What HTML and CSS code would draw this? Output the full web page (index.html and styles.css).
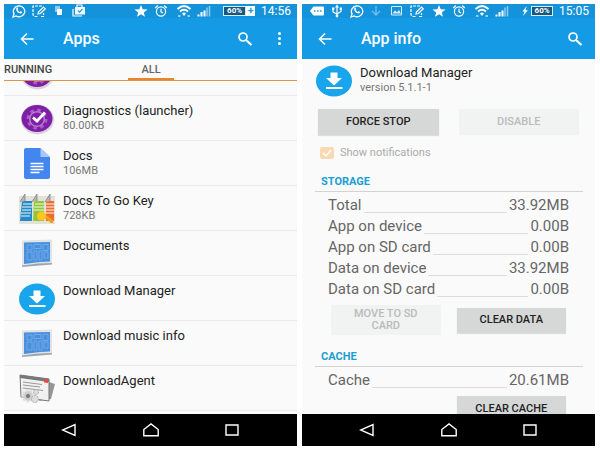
FILE: index.html
```html
<!DOCTYPE html>
<html lang="en">
<head>
  <meta charset="UTF-8">
  <title>Apps</title>
  <link rel="stylesheet" href="styles.css">
</head>
<body>
  <!-- Shared icons -->
  <svg class="sprite" aria-hidden="true">
    <symbol id="whatsapp" viewBox="0 0 14 14">
      <path d="M1 13l1-3.200a5.700 5.400 0 1 1 2.200 2.200z" fill="none" stroke="#fff" stroke-width="1.300"/>
      <path d="M4.600 3.800c.8-.5 1.200 0 1.500 1.200.1.500-.5.700-.5 1 .5 1 1.300 1.600 2.100 1.900.4 0 .7-.8 1.100-.7 1.200.5 1.600.8 1.300 1.500-.5 1-2 1-3.300.3C4.900 8 3.500 5.700 4.600 3.800z" fill="#fff"/>
    </symbol>
    <symbol id="note" viewBox="0 0 14 14">
      <path d="M10 2H1v9l2 1.500h3M9 12.500h2.500V9" fill="none" stroke="#fff" stroke-width="1.200" stroke-dasharray="3 1"/>
      <path d="M6 10l.6-2.300L11.500 3 13.300 4.800 8.300 9.500z" fill="none" stroke="#fff" stroke-width="1.200"/>
    </symbol>
    <symbol id="copy" viewBox="0 0 14 14">
      <path d="M3 2h5v6H3z" fill="#8ccbf2"/>
      <path d="M5 5h5v6H5z" fill="#fff"/>
    </symbol>
    <symbol id="case" viewBox="0 0 14 14">
      <path d="M1 5v7h9" fill="none" stroke="#fff" stroke-width="1.200"/>
      <path d="M5 3V1h5v2" fill="none" stroke="#fff" stroke-width="1.200"/>
      <path d="M3 3h10v7.500H3z" fill="#fff"/>
      <path d="M6 6.500l1.500 1.700L10.500 5" fill="none" stroke="#159be6" stroke-width="1.200"/>
    </symbol>
    <symbol id="message" viewBox="0 0 14 14">
      <path d="M0 7l3.500-4.500H13a1 1 0 0 1 1 1v7a1 1 0 0 1-1 1H3.500z" fill="#fff"/>
      <path d="M4 7h1.500M7 7h1.500M10 7h1.500" stroke="#159be6" stroke-width="1.500"/>
    </symbol>
    <symbol id="usb" viewBox="0 0 14 14">
      <path d="M7 2v10M3 5v3l4 2 4-2.500V5" fill="none" stroke="#fff" stroke-width="1.200"/>
      <path d="M5 3.500L7 .5l2 3zM2 3.500h2.400v2.300H2zM9.700 3.500H12v2.300H9.700z" fill="#fff"/>
      <circle cx="7" cy="12" r="1.400" fill="#fff"/>
    </symbol>
    <symbol id="arrow-down" viewBox="0 0 14 14">
      <path d="M6 2v9M2 7l4 4 4-4" fill="none" stroke="#6fc0f0" stroke-width="1.300"/>
    </symbol>
    <symbol id="image" viewBox="0 0 14 14">
      <path d="M1.500 2.500h10v8.500h-10z" fill="none" stroke="#d5edfb"/>
      <path d="M2.500 9.500l2.500-3 2 1.700 2-2.200 2 3.500z" fill="#d5edfb"/>
    </symbol>
    <symbol id="star" viewBox="0 0 14 14">
      <path d="M7 1l1.700 4.200 4.800.3-3.700 2.900 1.200 4.300L7 10.300l-4 2.400 1.200-4.300L.5 5.500l4.800-.3z" fill="#fff"/>
    </symbol>
    <symbol id="alarm" viewBox="0 0 14 14">
      <circle cx="7" cy="7.500" r="4.600" fill="none" stroke="#fff" stroke-width="1.200"/>
      <path d="M7 4.800v3l2 1.200M1.200 4l2.600-2.500M12.800 4l-2.600-2.500" fill="none" stroke="#fff" stroke-width="1.200"/>
    </symbol>
    <symbol id="wifi" viewBox="0 0 14 14">
      <path d="M.5 5Q7-1 13.500 5M3 7.500q4-3.500 8 0" fill="none" stroke="#fff" stroke-width="1.800"/>
      <path d="M5 9.500q2-1.800 4 0L7 12z" fill="#fff"/>
      <path d="M1 12h2.500M10.500 12H13" stroke="#bfe3f9" stroke-width="1.500"/>
    </symbol>
    <symbol id="signal" viewBox="0 0 14 14">
      <path d="M1.500 12.500v-2M4.500 12.500V8M7.500 12.500v-6" stroke="#fff" stroke-width="2"/>
      <path d="M10 12.500v-9M12.500 12.500V2" stroke="#8ccbf2" stroke-width="1.500"/>
    </symbol>
    <symbol id="back" viewBox="0 0 14 14">
      <path d="M13.500 7H1.500M7 1.500L1.500 7 7 12.500" fill="none" stroke="#fff" stroke-width="1.500"/>
    </symbol>
    <symbol id="search" viewBox="0 0 16 14">
      <circle cx="6" cy="5" r="4" fill="none" stroke="#fff" stroke-width="1.700"/>
      <path d="M9 8l5.500 5" stroke="#fff" stroke-width="2.200"/>
    </symbol>
    <symbol id="download" viewBox="0 0 36 32">
      <ellipse cx="18" cy="16" rx="18" ry="15.500" fill="#18a5ec"/>
      <path d="M14.500 7.500h7V13H26l-8 7.500-8-7.500h4.500zM10 22h16.500v2H10z" fill="#fff"/>
    </symbol>
    <symbol id="gear-check" viewBox="0 0 36 32">
      <ellipse cx="18.500" cy="16.500" rx="16.500" ry="15" fill="#d9d3de"/>
      <ellipse cx="18" cy="15.500" rx="15.500" ry="13.500" fill="#7f1fa8"/>
      <circle cx="18" cy="16" r="9" fill="none" stroke="#a561c4" stroke-width="3" stroke-dasharray="3.500 3.560"/>
      <circle cx="18" cy="16" r="7.300" fill="#7f1fa8" stroke="#b67bd0" stroke-width="1.500"/>
      <path d="M14 14.500l4 3.500 8-8.500" fill="none" stroke="#fff" stroke-width="2.800"/>
    </symbol>
    <symbol id="blueprint" viewBox="0 0 36 32">
      <path d="M3 2.500l30-1v24L3 28.500z" fill="#e0e3e5"/>
      <path d="M3 27.500l16-2 14-.5v1.500L3 29z" fill="#9ea6ad"/>
      <path d="M5 4.500l26-.5v19.500l-10 .5L5 26z" fill="#4a90dc"/>
      <path d="M8 7h5v5H8zM15 6.500h7v4h-7zM24 6.500h5v6h-5zM8 14h5v8H8zM15 13h3v9h-3zM20 13h3v9h-3zM25 14h4v6h-4z" fill="none" stroke="#7fb6ee" stroke-width=".7"/>
    </symbol>
    <symbol id="docs" viewBox="0 0 36 32">
      <path d="M7 0h14.500l9.500 9v20a2 2 0 0 1-2 2H7a2 2 0 0 1-2-2V2a2 2 0 0 1 2-2z" fill="#4486f0"/>
      <path d="M21.500 0L31 9h-9.500z" fill="#a9c8fa"/>
      <path d="M11.500 15.500h13M11.500 18.500h13M11.500 21.500h13M11.500 24.500h9" stroke="#fff" stroke-width="1.500"/>
    </symbol>
    <symbol id="docs-to-go" viewBox="0 0 36 32">
      <path d="M0 3h36v28H0z" fill="#e2e1da"/>
      <path d="M3 8h10v20H1z" fill="#238ac9"/>
      <path d="M15 8h10v20H14z" fill="#91c936"/>
      <path d="M27 8h8v20h-8z" fill="#ef6c2e"/>
      <path d="M4 11h9M3 14h10M3 17h9M2 20h10M2 23h9M16 11h9M15 14h10M15 17h10M27 11h8M27 14h8M27 17h8M27 20h8" stroke="#f5f5ef"/>
      <path d="M1 9l5-8v7M13 9l5-8v7M26 9l5-8v7" fill="#b7b8b5" stroke="#777975" stroke-width=".7"/>
      <path d="M24 24l8 6h2v-3l-8-6z" fill="#f29e1a"/>
      <circle cx="22.500" cy="23" r="4.500" fill="#ffc61b"/>
    </symbol>
    <symbol id="agent" viewBox="0 0 36 32">
      <path d="M30 9l6 2-4 15-12 2z" fill="#969696"/>
      <path d="M1 2l29 4v22L2 24z" fill="#f1f1f1" stroke="#777"/>
      <path d="M1 2l29 4v3L1 5z" fill="#777"/>
      <path d="M25 6l4 .6V10l-4-.6z" fill="#e64c42"/>
      <path d="M4 9l19 2.500M4 12l17 2M4 15l20 2.500" stroke="#999"/>
      <circle cx="9" cy="23" r="5" fill="#c9c9c9" stroke="#ddd" stroke-width="3" stroke-dasharray="2 1.500"/>
      <circle cx="9" cy="23" r="2" fill="#777"/>
      <circle cx="16" cy="26" r="3.500" fill="#ddd" stroke="#aaa" stroke-dasharray="2 1"/>
      <circle cx="17" cy="19" r="2.500" fill="#ddd" stroke="#aaa" stroke-dasharray="2 1"/>
    </symbol>
    <symbol id="nav-back" viewBox="0 0 16 14">
      <path d="M14 1.500v11L1.500 7z" fill="none" stroke="#fff" stroke-width="1.400"/>
    </symbol>
    <symbol id="nav-home" viewBox="0 0 16 14">
      <path d="M.8 12.800V6.500L8 1l7.200 5.500v6.300z" fill="none" stroke="#fff" stroke-width="1.400"/>
    </symbol>
    <symbol id="nav-recent" viewBox="0 0 16 14">
      <path d="M2 2h12v10H2z" fill="none" stroke="#fff" stroke-width="1.400"/>
    </symbol>
  </svg>

  <!-- Apps list -->
  <section class="phone">
    <header>
      <div class="status">
        <svg><use href="#whatsapp"/></svg>
        <svg><use href="#note"/></svg>
        <svg><use href="#copy"/></svg>
        <svg><use href="#case"/></svg>
        <svg class="star"><use href="#star"/></svg>
        <svg><use href="#alarm"/></svg>
        <svg class="wifi"><use href="#wifi"/></svg>
        <svg><use href="#signal"/></svg>
        <span class="battery"><b>60%</b><i>+</i></span>
        <time>14:56</time>
      </div>
      <div class="bar">
        <button class="icon-btn" aria-label="Back"><svg><use href="#back"/></svg></button>
        <h1>Apps</h1>
        <button class="icon-btn" aria-label="Search"><svg class="search"><use href="#search"/></svg></button>
        <button class="icon-btn more" aria-label="More"><span></span><span></span><span></span></button>
      </div>
    </header>
    <nav class="tabs">
      <a href="#running">RUNNING</a>
      <a href="#all" class="active">ALL</a>
    </nav>
    <ul class="apps">
      <li><svg><use href="#gear-check"/></svg></li>
      <li><svg><use href="#gear-check"/></svg><div><h2>Diagnostics (launcher)</h2><p>80.00KB</p></div></li>
      <li><svg><use href="#docs"/></svg><div><h2>Docs</h2><p>106MB</p></div></li>
      <li><svg><use href="#docs-to-go"/></svg><div><h2>Docs To Go Key</h2><p>728KB</p></div></li>
      <li><svg><use href="#blueprint"/></svg><div><h2>Documents</h2></div></li>
      <li><svg><use href="#download"/></svg><div><h2>Download Manager</h2></div></li>
      <li><svg><use href="#blueprint"/></svg><div><h2>Download music info</h2></div></li>
      <li><svg><use href="#agent"/></svg><div><h2>DownloadAgent</h2></div></li>
    </ul>
    <nav class="keys">
      <button aria-label="Back"><svg><use href="#nav-back"/></svg></button>
      <button aria-label="Home"><svg><use href="#nav-home"/></svg></button>
      <button aria-label="Recent"><svg><use href="#nav-recent"/></svg></button>
    </nav>
  </section>

  <!-- App info -->
  <section class="phone">
    <header>
      <div class="status">
        <svg><use href="#message"/></svg>
        <svg><use href="#usb"/></svg>
        <svg><use href="#whatsapp"/></svg>
        <svg><use href="#arrow-down"/></svg>
        <svg><use href="#image"/></svg>
        <svg><use href="#note"/></svg>
        <svg class="star"><use href="#star"/></svg>
        <svg><use href="#alarm"/></svg>
        <svg class="wifi"><use href="#wifi"/></svg>
        <svg><use href="#signal"/></svg>
        <span class="battery">
          <svg class="bolt" viewBox="0 0 8 12"><path d="M6 0L1 6.500h2.500L1.500 12 7.500 5H4.700z" fill="#fff"/></svg><b>60%</b>
        </span>
        <time>15:05</time>
      </div>
      <div class="bar">
        <button class="icon-btn" aria-label="Back"><svg><use href="#back"/></svg></button>
        <h1>App info</h1>
        <button class="icon-btn" aria-label="Search"><svg class="search"><use href="#search"/></svg></button>
      </div>
    </header>
    <main class="info">
      <div class="app-head">
        <svg><use href="#download"/></svg>
        <div>
          <h2>Download Manager</h2>
          <p>version 5.1.1-1</p>
        </div>
      </div>
      <div class="actions">
        <button class="btn">FORCE STOP</button>
        <button class="btn" disabled>DISABLE</button>
      </div>
      <label class="notify" for="notify">
        <input type="checkbox" id="notify" checked disabled>
        Show notifications
      </label>

      <h3>STORAGE</h3>
      <dl>
        <div><dt>Total</dt><dd>33.92MB</dd></div>
        <div><dt>App on device</dt><dd>0.00B</dd></div>
        <div><dt>App on SD card</dt><dd>0.00B</dd></div>
        <div><dt>Data on device</dt><dd>33.92MB</dd></div>
        <div><dt>Data on SD card</dt><dd>0.00B</dd></div>
      </dl>
      <div class="actions storage">
        <button class="btn" disabled>MOVE TO SD CARD</button>
        <button class="btn">CLEAR DATA</button>
      </div>

      <h3>CACHE</h3>
      <dl>
        <div><dt>Cache</dt><dd>20.61MB</dd></div>
      </dl>
      <div class="actions storage">
        <button class="btn last">CLEAR CACHE</button>
      </div>
    </main>
    <nav class="keys">
      <button aria-label="Back"><svg><use href="#nav-back"/></svg></button>
      <button aria-label="Home"><svg><use href="#nav-home"/></svg></button>
      <button aria-label="Recent"><svg><use href="#nav-recent"/></svg></button>
    </nav>
  </section>
</body>
</html>
```
FILE: styles.css
```css
* {
  box-sizing: border-box;
  margin: 0;
  padding: 0;
}
body {
  display: grid;
  grid-template-columns: 1fr 1fr;
  grid-template-rows: 100%;
  gap: 5px;
  height: 100vh;
  padding: 4px 5px 4px 4px;
  background-color: #fff;
  color: #222;
  font-family: Roboto, "Liberation Sans", sans-serif;
}
button {
  border: none;
  background: none;
  font-family: inherit;
  cursor: pointer;
}
svg {
  display: block;
  flex: none;
}
.sprite {
  position: absolute;
  width: 0;
  height: 0;
}
.phone {
  display: flex;
  flex-direction: column;
  min-width: 0;
  background-color: #fafafa;
}

/* Status bar and title bar */
header {
  flex: none;
  background-color: #159be6;
  color: #fff;
}
.status {
  display: flex;
  align-items: center;
  gap: 6px;
  height: 14px;
  padding: 0 6px 0 8px;
  background-color: #1593da;
}
.status svg {
  width: 14px;
  height: 14px;
}
.status .star {
  margin-left: auto;
}
.status .wifi {
  margin-left: 3px;
}
.battery {
  display: flex;
  align-items: center;
  width: 32px;
  margin-left: 6px;
  line-height: 8px;
}
.battery b {
  flex: 1;
  border: 1px solid #d5edfb;
  background-color: #17587f;
  font-size: 8px;
  text-align: center;
}
.battery i {
  width: 9px;
  background-color: #fff;
  color: #159be6;
  font: bold 10px/10px Roboto, sans-serif;
  text-align: center;
}
.status .bolt {
  width: 8px;
  height: 10px;
  margin-right: 2px;
}
.status time {
  font-size: 12px;
  line-height: 14px;
}
.bar {
  display: flex;
  align-items: center;
  height: 41px;
  padding: 0 12px 0 16px;
}
.bar h1 {
  flex: 1;
  margin-left: 29px;
  font-size: 16px;
  font-weight: 500;
}
.icon-btn svg {
  width: 14px;
  height: 14px;
}
.icon-btn .search {
  width: 16px;
}
.more {
  display: flex;
  flex-direction: column;
  align-items: center;
  gap: 2px;
  width: 12px;
  margin-left: 20px;
}
.more span {
  width: 3px;
  height: 3px;
  border-radius: 50%;
  background-color: #fff;
}

/* Tabs */
.tabs {
  display: flex;
  flex: none;
  height: 22px;
  border-bottom: 1px solid #df9448;
}
.tabs a {
  margin-right: 76px;
  color: #444;
  font-size: 11px;
  font-weight: 500;
  line-height: 22px;
  text-decoration: none;
}
.tabs .active {
  width: 46px;
  margin-right: 0;
  border-bottom: 2px solid #e8862c;
  color: #666;
  text-align: center;
}

/* App list, scrolled to the bottom */
.apps {
  display: flex;
  flex: 1;
  flex-direction: column;
  justify-content: flex-end;
  min-height: 0;
  padding-bottom: 3px;
  overflow: hidden;
  list-style: none;
}
.apps li {
  display: flex;
  flex: none;
  gap: 8px;
  height: 45px;
  padding: 7px 15px;
  border-bottom: 1px solid #e9e9e9;
}
.apps svg, .app-head svg {
  width: 36px;
  height: 32px;
}
h2 {
  font-size: 13px;
  font-weight: 400;
  line-height: 16px;
}
.apps p, .app-head p {
  color: #777;
  font-size: 11px;
  line-height: 14px;
}

/* App info */
.info {
  flex: 1;
  min-height: 0;
  padding: 6px 12px 0 13px;
  overflow: hidden;
}
.app-head {
  display: flex;
  gap: 8px;
  padding-left: 1px;
}
.actions {
  display: grid;
  grid-template-columns: 1fr 1fr;
  align-items: center;
  gap: 20px;
  padding: 12px 4px 0 3px;
}
.btn {
  min-height: 26px;
  background-color: #d6d7d7;
  color: #222;
  font-size: 11px;
  font-weight: 500;
  line-height: 12px;
  box-shadow: 0 1px 1px #ddd;
}
.btn:disabled {
  background-color: #f1f2f2;
  color: #bbb;
  box-shadow: none;
}
.notify {
  display: flex;
  align-items: center;
  gap: 6px;
  margin: 11px 0 0 5px;
  color: #aaa;
  font-size: 11px;
  line-height: 14px;
}
.notify input {
  appearance: none;
  width: 14px;
  height: 12px;
  border-radius: 2px;
  background: #f9d8b4 url("data:image/svg+xml,%3Csvg xmlns='http://www.w3.org/2000/svg' viewBox='0 0 14 12'%3E%3Cpath d='M3 6l3 3 5-6' fill='none' stroke='%23fff' stroke-width='1.500'/%3E%3C/svg%3E");
}
h3 {
  margin-top: 15px;
  padding: 0 6px 3px;
  border-bottom: 1px solid #d3d3d3;
  color: #1a9fd4;
  font-size: 11px;
  font-weight: 700;
  line-height: 13px;
}
dl {
  padding: 3px 14px 0 13px;
}
dl div {
  display: flex;
  height: 21px;
  color: #666;
  font-size: 15px;
  line-height: 21px;
}
dt {
  display: flex;
  flex: 1;
}
dt::after {
  content: "";
  flex: 1;
  height: 17px;
  margin: 0 2px;
  border-bottom: 1px solid #ddd;
}
.storage {
  gap: 16px;
  padding: 5px 17px 0 16px;
}
.storage .btn {
  min-height: 25px;
}
.storage .btn:disabled {
  padding: 3px 16px;
}
.storage .last {
  grid-column: 2;
}

/* Navigation keys */
.keys {
  display: flex;
  flex: none;
  height: 32px;
  padding: 0 24px;
  background-color: #000;
}
.keys button {
  display: flex;
  flex: 1;
  align-items: center;
  justify-content: center;
}
.keys svg {
  width: 16px;
  height: 14px;
}
```
